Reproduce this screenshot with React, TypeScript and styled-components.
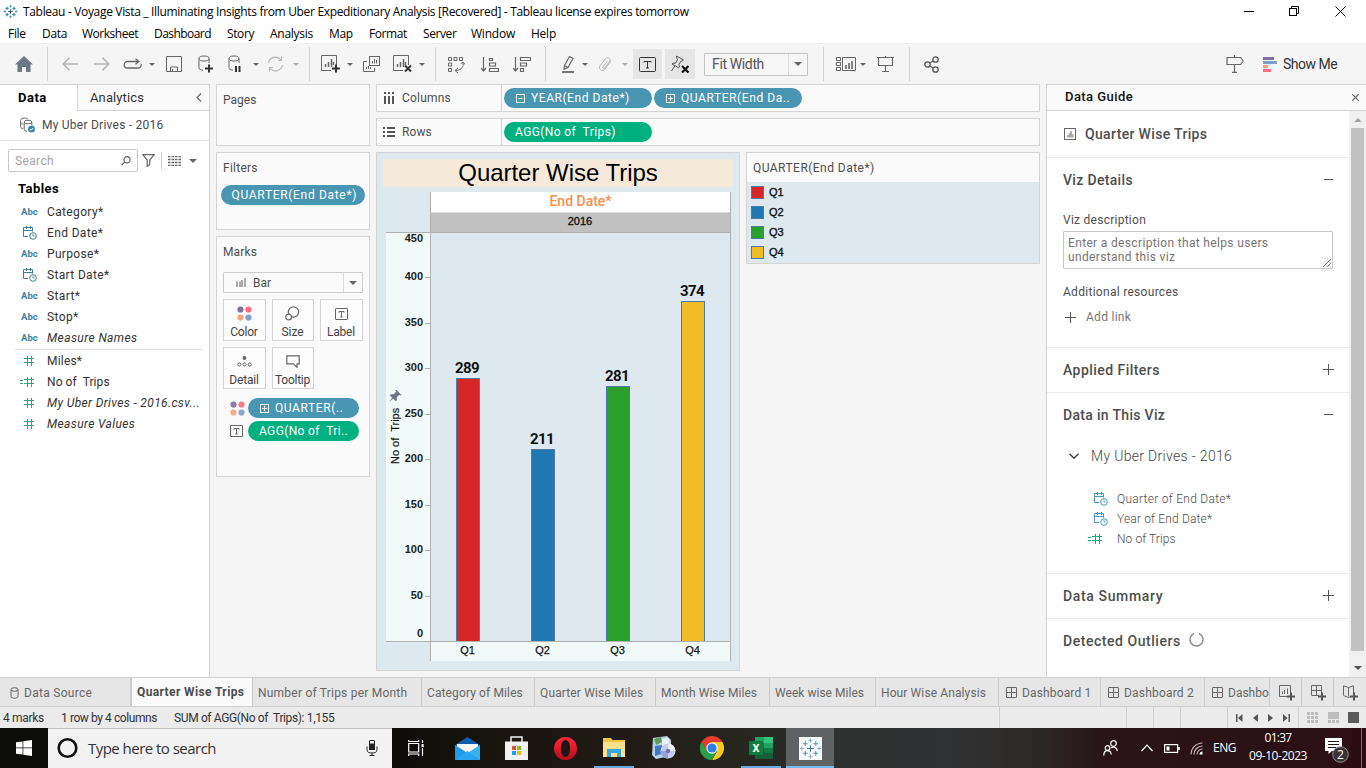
import React from 'react';
import styled, { createGlobalStyle } from 'styled-components';

const TEAL = '#4996b2';
const GREEN = '#00b180';
const LINE = '#d4d4d4';
const INK = '#4e4e4e';

const GlobalStyle = createGlobalStyle`
  * { box-sizing: border-box; }
  body { margin: 0; background: #f5f5f5; font-family: Roboto, "Open Sans", sans-serif; font-size: 12px; color: #333; }
  svg { display: block; flex: none; }
`;

const Text = styled.span<{ $ls?: number; $size?: number; $weight?: number; $color?: string; $italic?: boolean }>`
  font-size: ${p => p.$size ?? 12}px;
  font-weight: ${p => p.$weight ?? 400};
  font-style: ${p => (p.$italic ? 'italic' : 'normal')};
  letter-spacing: ${p => p.$ls ?? 0}px;
  color: ${p => p.$color ?? 'inherit'};
  line-height: 16px;
  white-space: pre;
`;
const SystemText = styled(Text)`
  font-family: "Open Sans", "Noto Sans", sans-serif;
`;

const Window = styled.div`
  width: 1366px;
  height: 768px;
  display: flex;
  flex-direction: column;
  overflow: hidden;
  background: #f5f5f5;
`;

/* Title and menu */
const TitleBar = styled.header`
  height: 23px;
  background: #fff;
  color: #000;
  display: flex;
  align-items: center;
  padding: 0 20px 0 3px;
  gap: 5px;
`;
const WindowButtons = styled.div`
  margin-left: auto;
  display: flex;
  align-items: center;
  gap: 35px;
  height: 20px;
`;
const MenuBar = styled.nav`
  height: 20px;
  background: #fff;
  color: #000;
  display: flex;
  align-items: center;
  padding: 1px 0 0 8px;
`;
const MenuItem = styled(SystemText)<{ $w: number }>`
  width: ${p => p.$w}px;
`;

/* Toolbar */
const Toolbar = styled.div`
  height: 41px;
  border-top: 1px solid #efefef;
  display: flex;
  align-items: center;
  flex: none;
`;
const Slot = styled.div<{ $w: number; $h?: number; $before?: number; $on?: boolean; $align?: string }>`
  width: ${p => p.$w}px;
  height: ${p => p.$h ?? 30}px;
  margin-left: ${p => p.$before ?? 0}px;
  background: ${p => (p.$on ? '#e5e5e5' : 'transparent')};
  display: flex;
  align-items: center;
  justify-content: ${p => p.$align ?? 'center'};
  flex: none;
`;
const ToolDivider = styled.div<{ $before?: number; $h?: number }>`
  width: 1px;
  height: ${p => p.$h ?? 34}px;
  margin-left: ${p => p.$before ?? 0}px;
  background: ${LINE};
  flex: none;
`;
const Caret = styled.i<{ $color?: string; $size?: number }>`
  width: 0;
  height: 0;
  border-left: ${p => p.$size ?? 3}px solid transparent;
  border-right: ${p => p.$size ?? 3}px solid transparent;
  border-top: ${p => p.$size ?? 3}px solid ${p => p.$color ?? '#666'};
`;
const FitSelect = styled.div`
  width: 104px;
  height: 23px;
  margin: 0 15px 0 9px;
  border: 1px solid #c4c4c4;
  border-radius: 1px;
  background: #f7f7f7;
  display: flex;
  align-items: center;
  padding-left: 7px;
  color: #555;
`;
const DropEnd = styled.div<{ $w: number }>`
  width: ${p => p.$w}px;
  align-self: stretch;
  margin-left: auto;
  border-left: 1px solid #dcdcdc;
  display: flex;
  align-items: center;
  justify-content: center;
`;

/* Main area */
const Main = styled.main`
  height: 593px;
  display: flex;
  flex: none;
`;
const DataPane = styled.aside`
  width: 210px;
  background: #fff;
  border-top: 1px solid ${LINE};
  border-right: 1px solid ${LINE};
  flex: none;
`;
const PaneTabs = styled.div`
  display: flex;
  height: 26px;
`;
const DataTab = styled.div`
  width: 77px;
  padding: 5px 0 0 18px;
  color: #000;
`;
const AnalyticsTab = styled.div`
  flex: 1;
  display: flex;
  justify-content: space-between;
  align-items: center;
  background: #fafafa;
  border-left: 1px solid ${LINE};
  border-bottom: 1px solid ${LINE};
  padding: 0 7px 0 12px;
`;
const SourceRow = styled.div`
  height: 30px;
  border-bottom: 1px solid #e2e2e2;
  display: flex;
  align-items: center;
  padding: 0 0 2px 19px;
  gap: 6px;
  color: #4a4a4a;
`;
const SearchRow = styled.div`
  display: flex;
  align-items: center;
  height: 23px;
  margin: 8px 0 0 8px;
`;
const SearchBox = styled.div`
  width: 130px;
  height: 23px;
  border: 1px solid #c8c8c8;
  border-radius: 2px;
  display: flex;
  align-items: center;
  justify-content: space-between;
  padding: 0 6px;
  margin-right: 4px;
`;
const TablesTitle = styled.div`
  height: 29px;
  padding: 9px 0 0 18px;
  color: #000;
`;
const FieldRow = styled.div`
  height: 21px;
  display: flex;
  align-items: center;
  color: #333;
`;
const FieldIcon = styled.div`
  width: 47px;
  padding: 1px 0 0 20px;
  display: flex;
`;
const FieldDivider = styled.div`
  height: 1px;
  margin: 1px 7px 0 15px;
  background: #dcdcdc;
`;

const Cards = styled.div`
  width: 154px;
  margin-left: 6px;
  display: flex;
  flex-direction: column;
  gap: 6px;
  flex: none;
`;
const Card = styled.section<{ $h: number }>`
  height: ${p => p.$h}px;
  border: 1px solid ${LINE};
  background: #fafafa;
  padding: 7px 4px 0;
  color: ${INK};
`;
const CardTitle = styled.div<{ $after?: number }>`
  padding-left: 2px;
  height: 16px;
  margin-bottom: ${p => p.$after ?? 0}px;
  display: flex;
`;
const Pill = styled.div<{ $w: number; $bg: string; $pad?: number; $before?: number }>`
  width: ${p => p.$w}px;
  height: 20px;
  margin-left: ${p => p.$before ?? 0}px;
  border-radius: 10px;
  background: ${p => p.$bg};
  color: #fff;
  display: flex;
  align-items: center;
  padding-left: ${p => p.$pad ?? 11}px;
  gap: 6px;
  flex: none;
`;
const MarkSelect = styled.div`
  width: 140px;
  height: 21px;
  margin: 12px 0 6px 2px;
  border: 1px solid #cbcbcb;
  border-radius: 1px;
  display: flex;
  align-items: center;
  padding-left: 12px;
  gap: 7px;
`;
const MarkGrid = styled.div`
  display: grid;
  grid-template-columns: 43px 42px 43px;
  grid-auto-rows: 42px;
  gap: 6px;
  margin: 0 0 9px 2px;
`;
const MarkButton = styled.div`
  border: 1px solid ${LINE};
  background: #fcfcfc;
  display: flex;
  flex-direction: column;
  align-items: center;
  justify-content: space-between;
  padding: 5px 1px 0 0;
  color: #444;
`;
const MarkIcon = styled.div`
  height: 17px;
  display: flex;
  align-items: center;
`;
const MarkPillRow = styled.div`
  display: flex;
  align-items: center;
  gap: 4px;
  margin: 0 0 3px 9px;
`;

const Workspace = styled.div`
  width: 664px;
  margin-left: 6px;
  display: flex;
  flex-direction: column;
  gap: 6px;
  flex: none;
`;
const Shelf = styled.div`
  height: 28px;
  border: 1px solid ${LINE};
  background: #fafafa;
  display: flex;
  align-items: center;
  color: ${INK};
`;
const ShelfName = styled.div`
  width: 125px;
  align-self: stretch;
  border-right: 1px solid ${LINE};
  display: flex;
  align-items: center;
  gap: 7px;
  padding-left: 6px;
`;
const ShelfPills = styled.div`
  display: flex;
  gap: 2px;
  padding-left: 2px;
`;
const Sheets = styled.div`
  display: flex;
  gap: 6px;
  align-items: flex-start;
`;
const Viz = styled.section`
  width: 364px;
  height: 519px;
  border: 1px solid ${LINE};
  background: #dde9ef;
  padding: 6px 6px 0;
`;
const VizTitle = styled.h1`
  margin: 0 0 5px;
  height: 28px;
  background: #f5ead9;
  color: #000;
  text-align: center;
  font: 400 24px/28px "Liberation Sans", Arial, sans-serif;
  letter-spacing: -0.03px;
`;
const Legend = styled.section`
  width: 294px;
  height: 112px;
  border: 1px solid ${LINE};
  background: #dde9ef;
  color: ${INK};
`;
const LegendTitle = styled.div`
  height: 29px;
  background: #fafafa;
  padding: 7px 0 0 6px;
`;
const LegendRow = styled.div`
  height: 20px;
  display: flex;
  align-items: center;
  gap: 5px;
  padding-left: 4px;
  color: #111;
  font: 400 11px "Liberation Sans", Arial, sans-serif;
  -webkit-text-stroke: 0.35px #111;
`;
const Swatch = styled.i<{ $c: string }>`
  width: 13px;
  height: 13px;
  background: ${p => p.$c};
  border: 1px solid #4e79a7;
`;

const Guide = styled.aside`
  width: 320px;
  margin-left: 6px;
  border-left: 1px solid ${LINE};
  border-top: 1px solid ${LINE};
  background: #fff;
  color: ${INK};
  display: flex;
  flex-direction: column;
  flex: none;
`;
const GuideHead = styled.div`
  height: 26px;
  background: #fafafa;
  border-bottom: 1px solid ${LINE};
  display: flex;
  align-items: center;
  justify-content: space-between;
  padding: 0 7px 1px 18px;
  color: #111;
  flex: none;
`;
const GuideBody = styled.div`
  display: flex;
  flex: 1;
`;
const GuideContent = styled.div`
  width: 302px;
`;
const Section = styled.section<{ $h: number }>`
  height: ${p => p.$h}px;
  border-bottom: 1px solid #ececec;
  padding: 0 15px 0 16px;
  &:last-child { border-bottom: 0; }
`;
const SectionHead = styled.div<{ $gap?: number }>`
  height: ${p => (p.$gap === 9 ? 45 : 43)}px;
  display: flex;
  align-items: center;
  gap: ${p => p.$gap ?? 0}px;
  & > svg:last-child { margin-left: ${p => (p.$gap ? 0 : 'auto')}; }
`;
const DescriptionLabel = styled.div`
  height: 16px;
  margin: 11px 0 3px;
  display: flex;
`;
const DescriptionBox = styled.div`
  width: 270px;
  height: 38px;
  border: 1px solid #c6c6c6;
  border-radius: 1px;
  padding: 4px 0 0 4px;
  display: flex;
  justify-content: space-between;
  color: #757575;
`;
const DescriptionText = styled.div`
  font-size: 12px;
  line-height: 14px;
  letter-spacing: 0.34px;
`;
const Grip = styled.div`
  align-self: flex-end;
  padding: 0 1px 1px 0;
`;
const ResourceLabel = styled.div`
  display: flex;
  margin-top: 15px;
`;
const AddLink = styled.div`
  display: flex;
  align-items: center;
  gap: 10px;
  margin: 9px 0 0 2px;
  color: #777;
`;
const GuideSource = styled.div`
  display: flex;
  align-items: center;
  height: 16px;
  gap: 12px;
  margin: 12px 0 25px 6px;
  color: #444;
`;
const GuideField = styled.div`
  height: 20px;
  display: flex;
  align-items: center;
  padding-left: 25px;
  gap: 9px;
  color: #4c4c4c;
`;
const Scrollbar = styled.div`
  width: 17px;
  background: #f0f0f0;
  display: flex;
  flex-direction: column;
  align-items: center;
  justify-content: space-between;
  padding: 7px 0 7px;
`;
const Thumb = styled.div`
  width: 13px;
  height: 523px;
  background: #c1c1c1;
  margin: 6px 0 auto;
`;
const UpArrow = styled.i`
  border-left: 4px solid transparent;
  border-right: 4px solid transparent;
  border-bottom: 4px solid #a3a3a3;
`;

/* Sheet tabs and status */
const SheetTabs = styled.div`
  height: 30px;
  display: flex;
  border-top: 1px solid #cfcfcf;
  border-bottom: 1px solid #cfcfcf;
  background: #e6e6e6;
  flex: none;
`;
const SheetTab = styled.div<{ $w: number; $active?: boolean; $edge?: number; $pad?: number }>`
  width: ${p => p.$w}px;
  border-right: ${p => p.$edge ?? 1}px solid #cacaca;
  background: ${p => (p.$active ? '#fafafa' : 'transparent')};
  padding: ${p => (p.$active ? 0 : 1)}px 0 0 ${p => p.$pad ?? 5}px;
  display: flex;
  align-items: center;
  gap: 5px;
  overflow: hidden;
  color: ${p => (p.$active ? '#4c4c4c' : '#666')};
  flex: none;
`;
const StatusBar = styled.footer`
  height: 21px;
  background: #ebebeb;
  display: flex;
  align-items: center;
  padding-left: 3px;
  color: #333;
  flex: none;
`;
const StatusText = styled(Text)<{ $w: number }>`
  width: ${p => p.$w}px;
  padding-top: 1px;
  flex: none;
`;
const StatusCell = styled.div<{ $w: number; $pad?: number }>`
  width: ${p => p.$w}px;
  align-self: stretch;
  border-left: 1px solid #cfcfcf;
  display: flex;
  align-items: center;
  justify-content: space-between;
  padding: 0 ${p => p.$pad ?? 0}px;
  flex: none;
`;

/* Taskbar */
const Taskbar = styled.div`
  height: 40px;
  display: flex;
  align-items: center;
  color: #fff;
  background: linear-gradient(90deg, #0c0c0b 0, #0e0c0a 390px, #17130d 480px, #211c15 640px, #26261f 740px, #2f3131 850px, #313233 950px, #2b2826 1040px, #291519 1100px, #2b0e14 1366px);
  flex: none;
`;
const StartButton = styled.div`
  width: 48px;
  display: flex;
  justify-content: center;
`;
const SearchInput = styled.div`
  width: 344px;
  height: 40px;
  background: #f2f2f2;
  border-top: 1px solid #c0c0c0;
  color: #333;
  display: flex;
  align-items: center;
  padding: 0 14px 1px 9px;
  gap: 10px;
  & > svg:last-child { margin-left: auto; }
`;
const TaskItem = styled.div<{ $w: number; $mark?: string; $active?: boolean }>`
  width: ${p => p.$w}px;
  height: 40px;
  display: flex;
  align-items: center;
  justify-content: center;
  background: ${p => (p.$active ? '#5f6263' : 'transparent')};
  ${p => p.$mark && `box-shadow: inset 0 -2px 0 ${p.$mark};`}
  flex: none;
`;
const Tray = styled.div`
  margin-left: auto;
  display: flex;
  align-items: center;
  height: 40px;
  padding-right: 4px;
`;
const Language = styled(SystemText)`
  width: 24px;
  margin-left: 10px;
`;
const Clock = styled.div`
  width: 60px;
  margin: 0 17px 0 11px;
  padding-bottom: 2px;
  display: flex;
  flex-direction: column;
  align-items: center;
  gap: 2px;
`;
const DesktopEdge = styled.div`
  width: 1px;
  height: 40px;
  margin-left: 12px;
  background: #7b6a6d;
`;

/* Icons */
type IconProps = { w: number; h: number; c?: string; sw?: number; children: React.ReactNode };
const Icon = ({ w, h, c = '#666', sw = 1, children }: IconProps) => (
  <svg width={w} height={h} viewBox={`0 0 ${w} ${h}`} fill="none" stroke={c} strokeWidth={sw}>{children}</svg>
);

const TableauMark = ({ s = 13, plate = false }: { s?: number; plate?: boolean }) => (
  <svg width={s} height={s} viewBox="0 0 24 24" fill="none">
    {plate && <rect width="24" height="24" fill="#f6f8f9" />}
    <g stroke={plate ? '#3f7ba0' : '#2f6d8f'} strokeWidth={plate ? 1.2 : 1.8}>
      <path d="M12 8.500v7M8.500 12h7" />
    </g>
    <g stroke={plate ? '#5c94b5' : '#3d85a8'} strokeWidth={plate ? 1.1 : 1.7}>
      <path d="M6.500 4.500v5M4 7h5M17.500 4.500v5M15 7h5M6.500 14.500v5M4 17h5M17.500 14.500v5M15 17h5" />
    </g>
    <g stroke={plate ? '#86b0c8' : '#4f97b6'} strokeWidth={plate ? 1 : 1.5}>
      <path d="M12 1.500v4M10 3.500h4M12 18.500v4M10 20.500h4M3 10v4M1 12h4M21 10v4M19 12h4" />
    </g>
  </svg>
);

const SmallPlus = ({ minus = false }: { minus?: boolean }) => (
  <Icon w={9} h={9} c="#fff"><rect x=".5" y=".5" width="8" height="8" /><path d={minus ? 'M2.500 4.500h4' : 'M2 4.500h5M4.500 2v5'} /></Icon>
);
const AbcIcon = styled.span`
  font: 700 9.5px/14px Roboto, sans-serif;
  color: #3f7f9b;
  padding-left: 1px;
`;
const DateIcon = ({ c = '#3f7f9b' }: { c?: string }) => (
  <svg width="14" height="14" viewBox="0 0 14 14" fill="none" stroke={c}>
    <path d="M9.500 5.500v-4H.5v9H5M.5 4.500h9M3.500 0v3M7.500 0v3" />
    <circle cx="10" cy="10" r="3.300" fill="#fff" />
    <path d="M10 8.200V10h1.600" strokeWidth=".9" />
  </svg>
);
const HashIcon = ({ c = '#3f9f7b', calc = false }: { c?: string; calc?: boolean }) => (
  <svg width="15" height="12" viewBox="0 0 15 12" fill="none" stroke={c}>
    <path d="M4 3.500h10M4 7.500h10M7.500 1v10M11.500 1v10" />
    {calc && <path d="M0 4.500h3M0 7.500h3" />}
  </svg>
);
const ColorDots = ({ dim = false }: { dim?: boolean }) => (
  <svg width="15" height="15" viewBox="0 0 15 15" opacity={dim ? 0.9 : 1}>
    <circle cx="3.500" cy="3.500" r="3.100" fill="#84709a" /><circle cx="11.500" cy="3.500" r="3.100" fill="#fb6e7c" />
    <circle cx="3.500" cy="11.500" r="3.100" fill="#f4a47a" /><circle cx="11.500" cy="11.500" r="3.100" fill="#7f9fc8" />
  </svg>
);
const LabelIcon = () => (
  <Icon w={13} h={12}><rect x=".5" y=".5" width="12" height="11" rx=".5" /><path d="M4 4.800V3.500h5v1.300M6.500 3.500v5.500M5.300 9h2.400" /></Icon>
);
const CylinderIcon = ({ children }: { children: React.ReactNode }) => (
  <Icon w={15} h={18}><ellipse cx="6" cy="3.500" rx="5" ry="2.500" /><path d="M1 3.500V13c0 1.200 1.500 2 4 2.200M11 3.500V8" />{children}</Icon>
);
const ChartBox = ({ children, w = 19 }: { children: React.ReactNode; w?: number }) => (
  <Icon w={w} h={18}><path d="M10 15.500H.5V.5h15V10" /><path d="M4.500 12V9M7.500 12V7M10.500 12V4M12.500 10V7" strokeWidth="1.500" />{children}</Icon>
);
const ListIcon = () => (
  <Icon w={13} h={10}><path d="M0 .5h13M0 3.500h13M0 6.500h13M0 9.500h13" strokeDasharray="2.500 1" strokeWidth="1.300" /></Icon>
);
const GridIcon = () => (
  <Icon w={11} h={11}><rect x=".5" y=".5" width="10" height="10" rx=".5" /><path d="M5.500 .5v10M.5 5.500h10" /></Icon>
);
const Toggle = ({ open }: { open: boolean }) => (
  <Icon w={11} h={11} c="#555"><path d={open ? 'M1 5.500h9' : 'M0 5.500h11M5.500 0v11'} /></Icon>
);

/* Data */
const menus: [string, number, number][] = [
  ['File', 34, -0.3], ['Data', 40, -0.3], ['Worksheet', 72, -0.48], ['Dashboard', 73, -0.55], ['Story', 43, -0.4], ['Analysis', 59, -0.27],
  ['Map', 40, -0.4], ['Format', 54, -0.4], ['Server', 48, -0.4], ['Window', 60, -0.22], ['Help', 30, -0.24],
];
type Kind = 'abc' | 'date' | 'hash' | 'calc';
const dimensions: [Kind, string, number, boolean?][] = [
  ['abc', 'Category*', 0.36], ['date', 'End Date*', 0.36], ['abc', 'Purpose*', 0.34], ['date', 'Start Date*', 0.34],
  ['abc', 'Start*', 0.4], ['abc', 'Stop*', 0.4], ['abc', 'Measure Names', 0.42, true],
];
const measures: [Kind, string, number, boolean?][] = [
  ['hash', 'Miles*', 0.2], ['calc', 'No of  Trips', 0.08], ['hash', 'My Uber Drives - 2016.csv...', 0.37, true], ['hash', 'Measure Values', 0.38, true],
];
const quarters = [
  { name: 'Q1', value: 289, x: 70, top: 186, color: '#d62728' },
  { name: 'Q2', value: 211, x: 145, top: 257, color: '#1f77b4' },
  { name: 'Q3', value: 281, x: 220, top: 194, color: '#2ca02c' },
  { name: 'Q4', value: 374, x: 295, top: 109, color: '#f0bc28' },
];
const ticks = [[400, 85], [350, 131], [300, 176], [250, 222], [200, 267], [150, 313], [100, 358], [50, 404]];
const sheetTabs: [string, number, number][] = [
  ['Number of Trips per Month', 169, 0.22], ['Category of Miles', 113, 0.12], ['Quarter Wise Miles', 121, 0.13],
  ['Month Wise Miles', 114, 0.04], ['Week wise Miles', 106, 0.03], ['Hour Wise Analysis', 123, 0.11],
];

const Field = ({ kind, label, ls, italic }: { kind: Kind; label: string; ls: number; italic?: boolean }) => (
  <FieldRow>
    <FieldIcon>
      {kind === 'abc' && <AbcIcon>Abc</AbcIcon>}
      {kind === 'date' && <Slot $w={17} $h={14} $align="flex-end"><DateIcon /></Slot>}
      {kind === 'hash' && <HashIcon />}
      {kind === 'calc' && <HashIcon calc />}
    </FieldIcon>
    <Text $ls={ls} $italic={italic}>{label}</Text>
  </FieldRow>
);

const Chart = () => (
  <svg width="350" height="470" viewBox="0 0 350 470" fontFamily='"Liberation Sans", Arial, sans-serif' fontSize="11" shapeRendering="crispEdges">
    <rect x="3" y="41" width="44" height="408" fill="#f1faf9" />
    <rect x="48" y="450" width="299" height="19" fill="#f1faf9" />
    <rect x="48" y="0" width="299" height="20" fill="#fff" />
    <rect x="48" y="21" width="299" height="19" fill="#c0c0c0" />
    <path d="M48 20.500h299" stroke="#d9d9d9" />
    {quarters.map(q => (
      <rect key={q.name} x={q.x + 3.5} y={q.top + 0.5} width="23" height={449 - q.top} fill={q.color} stroke="#4e79a7" />
    ))}
    <path d="M3 40.500h345M3 449.500h345M47.500 0v469M347.500 0v469" stroke="#b0b0b0" fill="none" />
    {ticks.map(([v, y]) => <path key={v} d={`M42 ${y}.500h5`} stroke="#b0b0b0" />)}
    <text x="197.500" y="14" textAnchor="middle" fontFamily="Roboto, sans-serif" fontSize="14" fontWeight="500" fill="#f88f4e">End Date*</text>
    <text x="197" y="33" textAnchor="middle" fill="#111" stroke="#111" strokeWidth=".35">2016</text>
    <g fontWeight="700" textAnchor="end" fill="#222">
      <text x="40" y="50">450</text>
      {ticks.map(([v, y]) => <text key={v} x="40" y={y + 3}>{v}</text>)}
      <text x="40" y="445">0</text>
    </g>
    {quarters.map(q => (
      <g key={q.name} textAnchor="middle" fill="#111">
        <text x={q.x + 14} y={q.top - 5} fontFamily="Roboto, sans-serif" fontSize="15" fontWeight="700" letterSpacing="-0.600">{q.value}</text>
        <text x={q.x + 14.5} y="462" stroke="#111" strokeWidth=".25">{q.name}</text>
      </g>
    ))}
    <text transform="translate(16 272) rotate(-90)" fill="#111" stroke="#111" strokeWidth=".15" style={{ whiteSpace: 'pre' }}>No of  Trips</text>
    <g transform="translate(11.500 204.500) rotate(45)" fill="#6b7788" shapeRendering="auto">
      <path d="M-3.500-6h7v1.500h-1.300V-1L4.300 1v1.500H.6L0 7.500-.6 2.500H-4.300V1l2.100-2v-3.500h-1.300z" />
    </g>
  </svg>
);

export default function App() {
  return (
    <Window>
      <GlobalStyle />
      <TitleBar>
        <TableauMark s={15} />
        <SystemText $ls={-0.33}>Tableau - Voyage Vista _ Illuminating Insights from Uber Expeditionary Analysis [Recovered] - Tableau license expires tomorrow</SystemText>
        <WindowButtons>
          <Icon w={10} h={11} c="#000"><path d="M0 5.500h10" /></Icon>
          <Icon w={11} h={11} c="#000"><rect x=".5" y="2.500" width="7" height="7" /><path d="M2.500 2V.5h7v7H8" /></Icon>
          <Icon w={11} h={11} c="#000"><path d="M.5 .5l10 10M10.500 .5l-10 10" /></Icon>
        </WindowButtons>
      </TitleBar>
      <MenuBar>{menus.map(([m, w, ls]) => <MenuItem key={m} $w={w} $ls={ls}>{m}</MenuItem>)}</MenuBar>

      <Toolbar>
        <Slot $w={47}><svg width="18" height="16" viewBox="0 0 18 16" fill="#6b7785"><path d="M9 0l9 8.500h-2.500V16H11v-5H7v5H2.500V8.500H0z" /></svg></Slot>
        <ToolDivider />
        <Slot $w={32} $before={6}><Icon w={16} h={14} c="#b5b5b5" sw={1.6}><path d="M16 7H1M7.500 .7L1.200 7l6.300 6.300" /></Icon></Slot>
        <Slot $w={32}><Icon w={16} h={14} c="#b5b5b5" sw={1.6}><path d="M0 7h15M8.500 .7L14.800 7l-6.300 6.300" /></Icon></Slot>
        <Slot $w={28}><Icon w={19} h={12} sw={1.3}><path d="M16 3.500H4.500a3.200 3.200 0 000 6.500H15a3 3 0 003-4M12.500 .8L15.800 3.500l-3.300 2.800" /></Icon></Slot>
        <Slot $w={12}><Caret /></Slot>
        <Slot $w={32}><Icon w={16} h={16}><path d="M.5 .5h15v15H.5zM4.500 15v-4h7v4M6.500 15v-2" /></Icon></Slot>
        <Slot $w={31}><CylinderIcon><path d="M7 13.500h8M11 9.500v8" stroke="#333" strokeWidth="2" /></CylinderIcon></Slot>
        <Slot $w={29}><CylinderIcon><path d="M8 11v6M11.500 11v6" stroke="#333" strokeWidth="2" /></CylinderIcon></Slot>
        <Slot $w={12}><Caret /></Slot>
        <Slot $w={27}><Icon w={17} h={16} c="#b8b8b8" sw={1.2}><path d="M1.500 7A7 7 0 0114 4M15.500 9A7 7 0 013 12M14.500 .5V4.500H11M2.500 15.500V11.500H6" /></Icon></Slot>
        <Slot $w={14}><Caret $color="#b0b0b0" /></Slot>
        <ToolDivider $before={6} />
        <Slot $w={32} $before={4}><ChartBox><path d="M11 13.500h8M15 9.500v8" stroke="#333" strokeWidth="2" /></ChartBox></Slot>
        <Slot $w={8}><Caret /></Slot>
        <Slot $w={34}><Icon w={17} h={16}><rect x="6.500" y=".5" width="10" height="9" /><path d="M4 5.500H.5v10h11V12M9.500 7.500V5M11.500 7.500V3M13.500 7.500V4M3.500 13V11M5.500 13V10M7.500 13V11" /></Icon></Slot>
        <Slot $w={28}><ChartBox><path d="M12 10.500l6 6M18 10.500l-6 6" stroke="#333" strokeWidth="2" /></ChartBox></Slot>
        <Slot $w={12}><Caret /></Slot>
        <ToolDivider $before={7} />
        <Slot $w={32} $before={4}><Icon w={17} h={17}><path d="M.5 1.500h3v3h-3zM6 1.500h3v3H6zM11.500 1.500h3v3h-3zM.5 7h3v3h-3zM.5 12.500h3v3h-3zM15 6.500c1 4-1.500 7.500-7 8M12.500 8L15 6l2 2.500M10 12l-3 2.500L10 17" /></Icon></Slot>
        <Slot $w={36}><Icon w={18} h={15} sw={1.2}><path d="M2.500 0v13M0 11l2.500 3L5 11M8.500 1.500h3v2h-3zM8.500 6h6v3h-6zM8.500 11.500h9v3h-9z" /></Icon></Slot>
        <Slot $w={28}><Icon w={18} h={15} sw={1.2}><path d="M2.500 0v13M0 11l2.500 3L5 11M7.500 .5h10v3h-10zM7.500 6h6v3h-6zM7.500 11.500h3v3h-3z" /></Icon></Slot>
        <ToolDivider $before={9} />
        <Slot $w={26} $before={9}><Icon w={13} h={18} sw={1.2}><path d="M2.500 10.500L7.500 1.500l3.500 2-5 9-4 1.700zM2.500 10.500l3.500 2" /><path d="M0 17h12" strokeWidth="1.800" /></Icon></Slot>
        <Slot $w={8}><Caret /></Slot>
        <Slot $w={32}><Icon w={14} h={16} c="#b5b5b5"><path d="M9.500 5l-4.500 6c-.8 1.200.8 2.200 1.600 1.200L11.500 5.500c2-3-2-5.500-4-2.700L2 9.800c-2 3 2.200 6.500 4.700 3.500L13 5" /></Icon></Slot>
        <Slot $w={8}><Caret $color="#b0b0b0" /></Slot>
        <Slot $w={29} $before={4} $on><Icon w={17} h={15} c="#333"><rect x=".5" y=".5" width="16" height="14" rx="1" /><path d="M5 5.500V4.500h7v1M8.500 4.500V11M7 11h3" /></Icon></Slot>
        <Slot $w={30} $before={3} $on><Icon w={20} h={18} c="#555"><path d="M6.500 1l7 4-1.500 1-1 0-2 3.500.5 2.500-1 .8-6.500-3.800 1-.8 2.500 0 2-3.500-.8-1.800zM5 10.700L1.500 16" /><path d="M12 11l6.500 6.500M18.500 11L12 17.500" stroke="#111" strokeWidth="2.200" /></Icon></Slot>
        <FitSelect><Text $size={14} $ls={-0.36}>Fit Width</Text><DropEnd $w={19}><Caret $size={4} /></DropEnd></FitSelect>
        <ToolDivider />
        <Slot $w={28} $before={8}><Icon w={20} h={15}><path d="M.5 .5h4v3h-4zM.5 5.500h4v3h-4zM.5 10.500h4v3h-4zM6.500 .5h13v13h-13z" /><path d="M10 12V8M13 12V6M16 12V4" strokeWidth="1.600" /></Icon></Slot>
        <Slot $w={6}><Caret /></Slot>
        <Slot $w={39}><Icon w={17} h={16} sw={1.2}><path d="M0 1.500h17M1.500 1.500v8h14v-8M8.500 9.500V15M5 15.500h7M8.500 0v1" /></Icon></Slot>
        <ToolDivider $before={4} />
        <Slot $w={43}><Icon w={15} h={17} c="#555" sw={1.3}><circle cx="3.500" cy="8.500" r="2.700" /><circle cx="11.500" cy="3.500" r="2.700" /><circle cx="11.500" cy="13.500" r="2.700" /><path d="M5.800 7L9.200 5M5.800 10L9.200 12" /></Icon></Slot>
        <Slot $w={18} $before={273}><Icon w={18} h={18} sw={1.2}><path d="M1 2.500h13.500L17.300 6l-2.800 3.500H1zM8.500 0v2.500M8.500 9.500V17M6 17.400h5" /></Icon></Slot>
        <Slot $w={14} $before={19}><svg width="14" height="15"><rect width="11" height="3" fill="#84709a" /><rect y="4" width="14" height="3" fill="#7f9fc8" /><rect y="8" width="5" height="3" fill="#f4a47a" /><rect y="12" width="8" height="3" fill="#fb6e7c" /></svg></Slot>
        <Slot $w={60} $before={6} $align="flex-start"><Text $size={14} $ls={-0.5}>Show Me</Text></Slot>
      </Toolbar>

      <Main>
        <DataPane>
          <PaneTabs>
            <DataTab><Text $size={13} $weight={700} $ls={0.5}>Data</Text></DataTab>
            <AnalyticsTab><Text $size={13} $ls={0.11}>Analytics</Text><Icon w={6} h={9} sw={1.2}><path d="M5 .5L1 4.500l4 4" /></Icon></AnalyticsTab>
          </PaneTabs>
          <SourceRow>
            <Icon w={17} h={16}><path d="M4 11.500C2 11.200 1.500 10.500 1.500 9.500v-6c0-1.500 2-2.500 4-2.500s3 .5 3.500 1M1.500 5.500c0 1 1 1.500 2.500 1.700" /><ellipse cx="9" cy="5" rx="3.800" ry="1.800" /><path d="M5.200 5v7.500c0 1 1.300 1.800 3 1.800M12.800 5v3" /><circle cx="12.500" cy="12" r="3.500" fill="#3f86a6" stroke="none" /><path d="M11 12l1.200 1.200 2-2.200" stroke="#fff" /></Icon>
            <Text $ls={0.24}>My Uber Drives - 2016</Text>
          </SourceRow>
          <SearchRow>
            <SearchBox><Text $color="#a5a5a5" $ls={0.36}>Search</Text><Icon w={10} h={10} sw={1.2}><circle cx="6" cy="3.800" r="3.100" /><path d="M3.800 6L.6 9.200" /></Icon></SearchBox>
            <Icon w={13} h={13} sw={1.2}><path d="M.8 .6h11.400L7.800 6v4.500l-2.600 1.800V6z" /></Icon>
            <ToolDivider $before={6} $h={18} />
            <Slot $w={24}><ListIcon /></Slot>
            <Slot $w={13}><Caret $size={4} /></Slot>
          </SearchRow>
          <TablesTitle><Text $size={13} $weight={700} $ls={0.42}>Tables</Text></TablesTitle>
          {dimensions.map(([k, l, ls, it]) => <Field key={l} kind={k} label={l} ls={ls} italic={it} />)}
          <FieldDivider />
          {measures.map(([k, l, ls, it]) => <Field key={l} kind={k} label={l} ls={ls} italic={it} />)}
        </DataPane>

        <Cards>
          <Card $h={62}><CardTitle><Text>Pages</Text></CardTitle></Card>
          <Card $h={78}>
            <CardTitle $after={9}><Text $ls={0.25}>Filters</Text></CardTitle>
            <Pill $w={144} $bg={TEAL} $pad={10.5}><Text $ls={0.68}>QUARTER(End Date*)</Text></Pill>
          </Card>
          <Card $h={241}>
            <CardTitle><Text $ls={0.13}>Marks</Text></CardTitle>
            <MarkSelect>
              <Icon w={10} h={11} c="#aaa" sw={2}><path d="M1 10V4.500M4 10V4.500M6 10V3M9 10V1" /></Icon>
              <Text>Bar</Text>
              <DropEnd $w={19}><Caret $size={4} /></DropEnd>
            </MarkSelect>
            <MarkGrid>
              <MarkButton><MarkIcon><ColorDots /></MarkIcon><Text $ls={-0.2}>Color</Text></MarkButton>
              <MarkButton><MarkIcon><Icon w={15} h={15} sw={1.2}><circle cx="8.500" cy="6" r="5.200" /><circle cx="3.600" cy="11" r="2.900" fill="#fcfcfc" /></Icon></MarkIcon><Text $ls={-0.1}>Size</Text></MarkButton>
              <MarkButton><MarkIcon><LabelIcon /></MarkIcon><Text $ls={-0.2}>Label</Text></MarkButton>
              <MarkButton><MarkIcon><Icon w={15} h={11}><circle cx="7.500" cy="2" r="1.900" fill="#666" stroke="none" /><circle cx="2.300" cy="8.500" r="1.600" /><circle cx="7.500" cy="8.500" r="1.600" /><circle cx="12.700" cy="8.500" r="1.600" /></Icon></MarkIcon><Text $ls={-0.2}>Detail</Text></MarkButton>
              <MarkButton><MarkIcon><Icon w={14} h={13} sw={1.2}><path d="M.8 .8h12.400v8H11v3.500L7.500 8.800H.8z" /></Icon></MarkIcon><Text $ls={-0.25}>Tooltip</Text></MarkButton>
            </MarkGrid>
            <MarkPillRow><ColorDots dim /><Pill $w={111} $bg={TEAL} $pad={12} $before={-1}><SmallPlus /><Text $ls={0.6}>QUARTER(..</Text></Pill></MarkPillRow>
            <MarkPillRow><LabelIcon /><Pill $w={111} $bg={GREEN} $before={1}><Text $ls={0.36}>AGG(No of  Tri..</Text></Pill></MarkPillRow>
          </Card>
        </Cards>

        <Workspace>
          <Shelf>
            <ShelfName>
              <Icon w={12} h={12} c="#555" sw={2}><path d="M2 0v2M6 0v2M10 0v2M2 4v8M6 4v8M10 4v8" /></Icon>
              <Text $ls={0.21}>Columns</Text>
            </ShelfName>
            <ShelfPills>
              <Pill $w={148} $bg={TEAL} $pad={12}><SmallPlus minus /><Text $ls={0.55}>YEAR(End Date*)</Text></Pill>
              <Pill $w={148} $bg={TEAL} $pad={12}><SmallPlus /><Text $ls={0.58}>QUARTER(End Da..</Text></Pill>
            </ShelfPills>
          </Shelf>
          <Shelf>
            <ShelfName>
              <Icon w={12} h={12} c="#555" sw={2}><path d="M0 2h2M4 2h8M0 6h2M4 6h8M0 10h2M4 10h8" /></Icon>
              <Text $ls={0.1}>Rows</Text>
            </ShelfName>
            <ShelfPills><Pill $w={148} $bg={GREEN}><Text $ls={0.39}>AGG(No of  Trips)</Text></Pill></ShelfPills>
          </Shelf>
          <Sheets>
            <Viz>
              <VizTitle>Quarter Wise Trips</VizTitle>
              <Chart />
            </Viz>
            <Legend>
              <LegendTitle><Text $ls={0.46}>QUARTER(End Date*)</Text></LegendTitle>
              {quarters.map(q => <LegendRow key={q.name}><Swatch $c={q.color} />{q.name}</LegendRow>)}
            </Legend>
          </Sheets>
        </Workspace>

        <Guide>
          <GuideHead><Text $size={13} $weight={500} $ls={0.43}>Data Guide</Text><Icon w={7} h={7} sw={1.2}><path d="M.3 .3l6.400 6.400M6.700 .3L.3 6.700" /></Icon></GuideHead>
          <GuideBody>
            <GuideContent>
              <Section $h={47}>
                <SectionHead $gap={9}>
                  <svg width="13" height="12" viewBox="0 0 13 12"><rect x="1.500" y=".5" width="11" height="11" fill="none" stroke="#666" /><path d="M4 9.500V7h1.500V5H7V3h2v3h1.500v3.500z" fill="#aaa" /></svg>
                  <Text $size={14} $weight={500} $ls={0.34}>Quarter Wise Trips</Text>
                </SectionHead>
              </Section>
              <Section $h={190}>
                <SectionHead><Text $size={14} $weight={500} $ls={0.33}>Viz Details</Text><Toggle open /></SectionHead>
                <DescriptionLabel><Text $ls={0.26}>Viz description</Text></DescriptionLabel>
                <DescriptionBox>
                  <DescriptionText>Enter a description that helps users<br />understand this viz</DescriptionText>
                  <Grip><Icon w={8} h={8} c="#555" sw={0.8}><path d="M0 8l8-8M4 8l4-4" /></Icon></Grip>
                </DescriptionBox>
                <ResourceLabel><Text $ls={0.29}>Additional resources</Text></ResourceLabel>
                <AddLink><Toggle open={false} /><Text $ls={0.28}>Add link</Text></AddLink>
              </Section>
              <Section $h={45}><SectionHead><Text $size={14} $weight={500} $ls={0.45}>Applied Filters</Text><Toggle open={false} /></SectionHead></Section>
              <Section $h={181}>
                <SectionHead><Text $size={14} $weight={500} $ls={0.32}>Data in This Viz</Text><Toggle open /></SectionHead>
                <GuideSource><Icon w={10} h={6} c="#333" sw={1.3}><path d="M.5 .8L5 5.200 9.500 .8" /></Icon><Text $size={14} $weight={300} $ls={0.32}>My Uber Drives - 2016</Text></GuideSource>
                <GuideField><Slot $w={20} $h={14} $align="flex-end"><DateIcon c={TEAL} /></Slot><Text $weight={300} $ls={0.28}>Quarter of End Date*</Text></GuideField>
                <GuideField><Slot $w={20} $h={14} $align="flex-end"><DateIcon c={TEAL} /></Slot><Text $weight={300} $ls={0.16}>Year of End Date*</Text></GuideField>
                <GuideField><Slot $w={20} $h={14} $align="flex-start"><HashIcon c={GREEN} calc /></Slot><Text $weight={300} $ls={0.08}>No of Trips</Text></GuideField>
              </Section>
              <Section $h={45}><SectionHead><Text $size={14} $weight={500} $ls={0.64}>Data Summary</Text><Toggle open={false} /></SectionHead></Section>
              <Section $h={50}>
                <SectionHead $gap={8}>
                  <Text $size={14} $weight={500} $ls={0.54}>Detected Outliers</Text>
                  <Icon w={15} h={18} c="#8a8a8a" sw={1.4}><path d="M10 1.500a6.500 6.500 0 11-5 0" /></Icon>
                </SectionHead>
              </Section>
            </GuideContent>
            <Scrollbar><UpArrow /><Thumb /><Caret $size={4} $color="#505050" /></Scrollbar>
          </GuideBody>
        </Guide>
      </Main>

      <SheetTabs>
        <SheetTab $w={132} $edge={2} $pad={10}><Icon w={9} h={12}><ellipse cx="4.500" cy="2.500" rx="3.500" ry="1.800" /><path d="M1 2.500v7c0 2.300 7 2.300 7 0v-7" /></Icon><Text $ls={0.29}>Data Source</Text></SheetTab>
        <SheetTab $w={121} $active><Text $weight={700} $ls={0.38}>Quarter Wise Trips</Text></SheetTab>
        {sheetTabs.map(([l, w, ls]) => <SheetTab key={l} $w={w}><Text $ls={ls}>{l}</Text></SheetTab>)}
        <SheetTab $w={102} $pad={7}><GridIcon /><Text $ls={0.14}>Dashboard 1</Text></SheetTab>
        <SheetTab $w={104} $pad={7}><GridIcon /><Text $ls={0.2}>Dashboard 2</Text></SheetTab>
        <SheetTab $w={65} $pad={7}><GridIcon /><Text $ls={0}>Dashbo</Text></SheetTab>
        <SheetTab $w={32} $pad={9}><Icon w={16} h={16}><path d="M8 11.500H.5v-11h11V8M3.500 9V6.500M5.500 9V5M8.500 9V3.500" /><path d="M8 11.500h8M12 7.500v8" stroke="#555" strokeWidth="2" /></Icon></SheetTab>
        <SheetTab $w={32} $pad={9}><Icon w={16} h={16}><path d="M8 10.500H.5V.5h10V8M5.500 .5v10M.5 5.500h10" /><path d="M7 11.500h8M11 7.500v8" stroke="#555" strokeWidth="2" /></Icon></SheetTab>
        <SheetTab $w={33} $pad={9}><Icon w={16} h={16}><path d="M8 11.500L5.500 12.500 .5 10.500V.8L5.500 2.500 10.500 .8V8M5.500 2.500v9" /><path d="M7 11.500h8M11 7.500v8" stroke="#555" strokeWidth="2" /></Icon></SheetTab>
      </SheetTabs>

      <StatusBar>
        <StatusText $w={58} $ls={-0.3}>4 marks</StatusText>
        <StatusText $w={113} $ls={-0.42}>1 row by 4 columns</StatusText>
        <StatusText $w={825} $ls={-0.37}>SUM of AGG(No of  Trips): 1,155</StatusText>
        <StatusCell $w={127} /><StatusCell $w={27} /><StatusCell $w={27} /><StatusCell $w={47} />
        <StatusCell $w={71} $pad={8}>
          <svg width="7" height="8" fill="#555"><path d="M0 0h1.500v8H0zM6.500 0v8L2 4z" /></svg>
          <svg width="5" height="8" fill="#555"><path d="M5 0v8L0 4z" /></svg>
          <svg width="5" height="8" fill="#555"><path d="M0 0v8l5-4z" /></svg>
          <svg width="7" height="8" fill="#555"><path d="M5.500 0H7v8H5.500zM0 0v8l4.500-4z" /></svg>
        </StatusCell>
        <StatusCell $w={69} $pad={8}>
          <svg width="11" height="11" fill="#bdbdbd"><path d="M0 0h3v3H0zM4 0h3v3H4zM8 0h3v3H8zM0 4h3v3H0zM4 4h3v3H4zM8 4h3v3H8zM0 8h3v3H0zM4 8h3v3H4zM8 8h3v3H8z" /></svg>
          <svg width="11" height="11" fill="#bdbdbd"><path d="M0 0h11v7H0zM0 8h3v3H0zM4 8h3v3H4zM8 8h3v3H8z" /></svg>
          <svg width="11" height="11" fill="#5a5a5a"><path d="M0 0h11v11H0z" /></svg>
        </StatusCell>
      </StatusBar>

      <Taskbar>
        <StartButton><svg width="16" height="16" viewBox="0 0 16 16" fill="#fff"><path d="M0 2.300l6.600-.9v6.200H0zM7.300 1.300L16 0v7.600H7.300zM0 8.300h6.600v6.300L0 13.700zM7.300 8.300H16V16l-8.700-1.200z" /></svg></StartButton>
        <SearchInput>
          <Icon w={21} h={22} c="#111" sw={2.6}><circle cx="10.500" cy="11" r="8.800" /></Icon>
          <SystemText $size={15} $ls={-0.53}>Type here to search</SystemText>
          <svg width="12" height="16" viewBox="0 0 12 16" fill="none" stroke="#222"><rect x="3.500" y=".5" width="5" height="9" rx=".5" /><rect x="3.500" y="4" width="5" height="5.500" fill="#222" /><path d="M1 6.500v3c0 3 2.500 3.500 5 3.500s5-.5 5-3.500v-3M6 13v3M3.500 15.500h5" /></svg>
        </SearchInput>
        <TaskItem $w={48}><Icon w={17} h={16} c="#fff" sw={1.2}><path d="M.7 3.500h10v8.500h-10zM.7 0v1.500h10V0M.7 16v-2h10v2M14.500 0v3M14.500 8v8" /><rect x="13.500" y="4" width="2.200" height="3" fill="#fff" stroke="none" /></Icon></TaskItem>
        <TaskItem $w={54}><svg width="25" height="23" viewBox="0 0 25 23"><path d="M12.500 0L25 8v15H0V8z" fill="#0a5da8" /><path d="M2 7h21v10H2z" fill="#f4f8fb" /><path d="M0 8l12.500 8L0 23z" fill="#1f9be6" /><path d="M25 8l-12.500 8L25 23z" fill="#35b2f2" /><path d="M0 23l12.500-9L25 23z" fill="#2aa4ee" /></svg></TaskItem>
        <TaskItem $w={44}><svg width="23" height="24" viewBox="0 0 23 24"><path d="M6 7V1h11v6" fill="none" stroke="#f0f0f0" strokeWidth="1.500" /><path d="M0 5.500h23V24H0z" fill="#f2f2f2" /><path d="M7 10h4v4H7z" fill="#e8502a" /><path d="M12 10h4v4h-4z" fill="#7fb92e" /><path d="M7 15h4v4H7z" fill="#1fa1e8" /><path d="M12 15h4v4h-4z" fill="#f8b51a" /></svg></TaskItem>
        <TaskItem $w={54}><svg width="23" height="23" viewBox="0 0 23 23"><defs><linearGradient id="op" x1="0" y1="0" x2="0" y2="1"><stop offset="0" stopColor="#ff2a3d" /><stop offset="1" stopColor="#b80a18" /></linearGradient></defs><path fillRule="evenodd" fill="url(#op)" d="M11.500 0a11.500 11.500 0 100 23 11.500 11.500 0 000-23zm0 3c3 0 4.600 4 4.600 8.500S14.500 20 11.500 20s-4.600-4-4.600-8.500S8.500 3 11.500 3z" /></svg></TaskItem>
        <TaskItem $w={2} />
        <TaskItem $w={40} $mark="#69a9df"><svg width="22" height="20" viewBox="0 0 22 20"><path d="M0 0h8l1.500 2H22v17H0z" fill="#f3c44a" /><path d="M0 4h22v15H0z" fill="#fde08a" /><path d="M4 19v-8h14v8h-4v-4H8v4z" fill="#37a9e4" /></svg></TaskItem>
        <TaskItem $w={57}><svg width="26" height="24" viewBox="0 0 26 24"><path d="M3 2l14-2 4 4v16L6 23 2 19z" fill="#b5d3ea" /><path d="M4 3l7-2 1 5-6 3z" fill="#5f9b57" /><path d="M5 10l7-1-1 9-6 2z" fill="#3f77c4" /><path d="M12 3l7-1v7l-7 1z" fill="#e7f1f8" /><circle cx="18" cy="15" r="7.500" fill="#c9cdef" /><path d="M18 7.500A7.500 7.500 0 0125.500 15L18 15z" fill="#e8ecfa" /><path d="M10.500 15A7.500 7.500 0 0018 22.500V15z" fill="#98a6e0" /><circle cx="18" cy="15" r="2.300" fill="#6f78b5" /></svg></TaskItem>
        <TaskItem $w={42}><svg width="24" height="24" viewBox="0 0 24 24"><path d="M12 12L1.600 6A12 12 0 0122.400 6z" fill="#e33b2e" /><path d="M12 6h10.400A12 12 0 0112 24l5.200-9z" fill="#fcc81d" /><path d="M1.600 6a12 12 0 000 12L12 24l5-9H6.800z" fill="#2a9f4b" /><path d="M1.600 6L6.800 15 12 12V6z" fill="#e33b2e" /><path d="M1.600 6A12 12 0 0012 24L6.800 15z" fill="#2a9f4b" /><circle cx="12" cy="12" r="5.700" fill="#fff" /><circle cx="12" cy="12" r="4.600" fill="#2f7de9" /></svg></TaskItem>
        <TaskItem $w={8} />
        <TaskItem $w={40} $mark="#69a9df"><svg width="24" height="22" viewBox="0 0 24 22"><path d="M6 0h18v22H6z" fill="#185c37" /><path d="M6 0h9v6H6z" fill="#21a366" /><path d="M15 0h9v6h-9z" fill="#33c481" /><path d="M15 6h9v5h-9z" fill="#21a366" /><path d="M6 6h9v5H6z" fill="#107c41" /><path d="M15 11h9v5h-9z" fill="#107c41" /><rect y="4" width="14" height="14" fill="#107c41" /><text x="7" y="15" fontSize="11" fontWeight="700" fill="#fff" textAnchor="middle" fontFamily="Roboto, sans-serif">X</text></svg></TaskItem>
        <TaskItem $w={5} />
        <TaskItem $w={48} $mark="#76b9ed" $active><TableauMark s={23} plate /></TaskItem>
        <Tray>
          <Icon w={15} h={16} c="#fff" sw={1.2}><circle cx="10.500" cy="3.500" r="2.800" /><circle cx="4.500" cy="8" r="2.300" /><path d="M.8 15.500c0-3 1.500-4.800 3.700-4.800s3.500 1.500 3.700 3.800M8 7.800c3-1.700 6 0 6.300 3.200" /></Icon>
          <Slot $w={12} $before={23}><Icon w={12} h={8} c="#fff" sw={1.2}><path d="M.5 7L6 1.200 11.500 7" /></Icon></Slot>
          <Slot $w={16} $before={11}><Icon w={16} h={9} c="#fff" sw={1.2}><rect x=".6" y=".6" width="13" height="7.800" /><path d="M15 3v3" strokeWidth="1.600" /><rect x="2.500" y="2.500" width="3" height="4" fill="#fff" stroke="none" /></Icon></Slot>
          <Slot $w={14} $before={9}><Icon w={13} h={13} c="#c9bcbe" sw={1.1}><path d="M1 12.500A11.500 11.500 0 0112.500 1M4 12.500A8.500 8.500 0 0112.500 4M7 12.500A5.500 5.500 0 0112.500 7" /><path d="M9.500 12.500a3 3 0 013-3v3z" fill="#fff" stroke="none" /></Icon></Slot>
          <Language $ls={-0.48}>ENG</Language>
          <Clock><SystemText $ls={-0.72}>01:37</SystemText><SystemText $ls={-0.46}>09-10-2023</SystemText></Clock>
          <svg width="24" height="30" viewBox="0 0 24 30"><path d="M0 5h17v13H7l-3.500 3V18H0z" fill="#fff" /><path d="M3 8.500h11M3 11.500h11M3 14.500h8" stroke="#2b0e14" /><circle cx="15.500" cy="21.500" r="7.800" fill="#3a3236" stroke="#9b9294" /><text x="15.500" y="26" fontSize="12" fill="#fff" textAnchor="middle" fontFamily="Open Sans, sans-serif">2</text></svg>
          <DesktopEdge />
        </Tray>
      </Taskbar>
    </Window>
  );
}
